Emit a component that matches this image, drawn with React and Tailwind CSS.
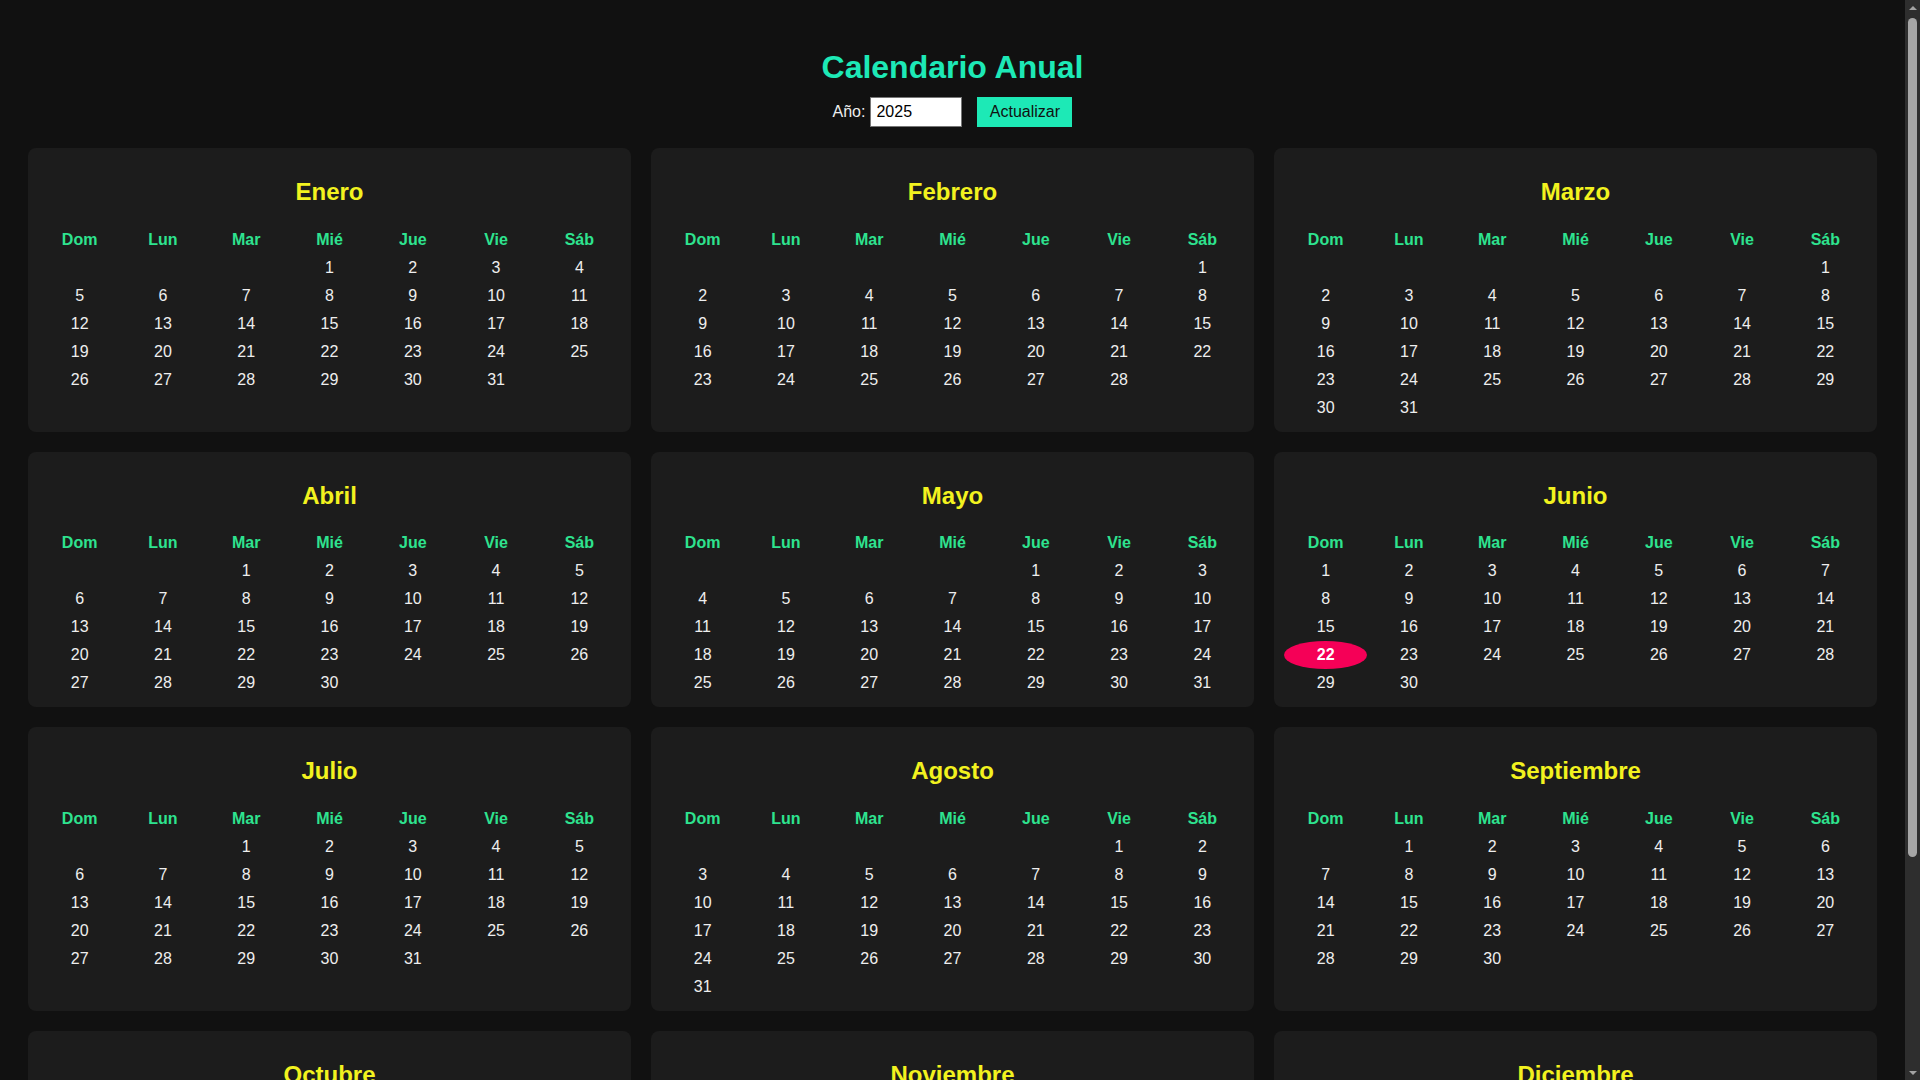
import React, { useState } from 'react'

const MESES = [
  'Enero', 'Febrero', 'Marzo', 'Abril', 'Mayo', 'Junio',
  'Julio', 'Agosto', 'Septiembre', 'Octubre', 'Noviembre', 'Diciembre',
]
const DIAS = ['Dom', 'Lun', 'Mar', 'Mié', 'Jue', 'Vie', 'Sáb']

// fixed "today" so the highlight matches the picture
const HOY = { year: 2025, month: 5, day: 22 }

function buildMonth(year, month) {
  const first = new Date(year, month, 1).getDay()
  const total = new Date(year, month + 1, 0).getDate()
  const cells = []
  for (let i = 0; i < first; i++) cells.push(null)
  for (let d = 1; d <= total; d++) cells.push(d)
  while (cells.length % 7 !== 0) cells.push(null)
  return cells
}

function MonthCard({ year, month }) {
  const cells = buildMonth(year, month)

  return (
    <div className="bg-[#1c1c1c] rounded-[8px] p-[10px]">
      <h2 className="my-[20px] text-[24px] leading-[27.6px] font-bold text-center text-[#f2f21f]">
        {MESES[month]}
      </h2>
      <div className="grid grid-cols-7">
        {DIAS.map((d) => (
          <div key={d} className="h-[28px] flex items-center justify-center font-bold text-[#2ee38f]">
            {d}
          </div>
        ))}
        {cells.map((d, i) => {
          const isToday = year === HOY.year && month === HOY.month && d === HOY.day
          return (
            <div
              key={i}
              className={`h-[28px] flex items-center justify-center ${
                isToday ? 'bg-[#f50057] rounded-[50%] font-bold text-white' : 'text-[#eeeeee]'
              }`}
            >
              {d ?? ''}
            </div>
          )
        })}
      </div>
    </div>
  )
}

// dark page scrollbar as it shows in the screenshot
function ScrollBar() {
  return (
    <div className="w-[15px] shrink-0 h-screen bg-[#2e2e2e] flex flex-col items-center">
      <div className="h-[15px] flex items-center justify-center">
        <div className="w-0 h-0 border-l-[4px] border-r-[4px] border-b-[4px] border-l-transparent border-r-transparent border-b-[#a3a3a3]" />
      </div>
      <div className="mt-[3px] w-[9px] h-[839px] rounded-full bg-[#a6a6a6]" />
      <div className="flex-1" />
      <div className="h-[15px] flex items-center justify-center">
        <div className="w-0 h-0 border-l-[4px] border-r-[4px] border-t-[4px] border-l-transparent border-r-transparent border-t-[#a3a3a3]" />
      </div>
    </div>
  )
}

export default function App() {
  const [input, setInput] = useState('2025')
  const [year, setYear] = useState(2025)

  const actualizar = () => {
    const y = parseInt(input, 10)
    if (!isNaN(y)) setYear(y)
  }

  return (
    <div className="flex h-screen overflow-hidden bg-[#111111] text-[16px] font-['Liberation_Sans',Arial,sans-serif]">
      <div className="flex-1 min-w-0 h-screen overflow-y-auto">
        <div className="p-[28px]">
          {/* Header */}
          <h1 className="mt-[21px] text-[32px] leading-[37px] font-bold text-center text-[#1de9b6]">
            Calendario Anual
          </h1>

          <div className="mt-[11px] flex items-center justify-center">
            <label className="text-[#eeeeee] mr-[5px]">Año:</label>
            <input
              type="number"
              value={input}
              onChange={(e) => setInput(e.target.value)}
              className="w-[92px] h-[30px] bg-white text-black border border-[#767676] px-[5px] outline-none [appearance:textfield] [&::-webkit-inner-spin-button]:appearance-none"
            />
            <button
              onClick={actualizar}
              className="ml-[15px] h-[30px] w-[95px] bg-[#1de9b6] text-[#111111] cursor-pointer"
            >
              Actualizar
            </button>
          </div>

          {/* Months */}
          <div className="mt-[21px] grid grid-cols-3 gap-5">
            {MESES.map((_, m) => (
              <MonthCard key={m} year={year} month={m} />
            ))}
          </div>
        </div>
      </div>
      <ScrollBar />
    </div>
  )
}
